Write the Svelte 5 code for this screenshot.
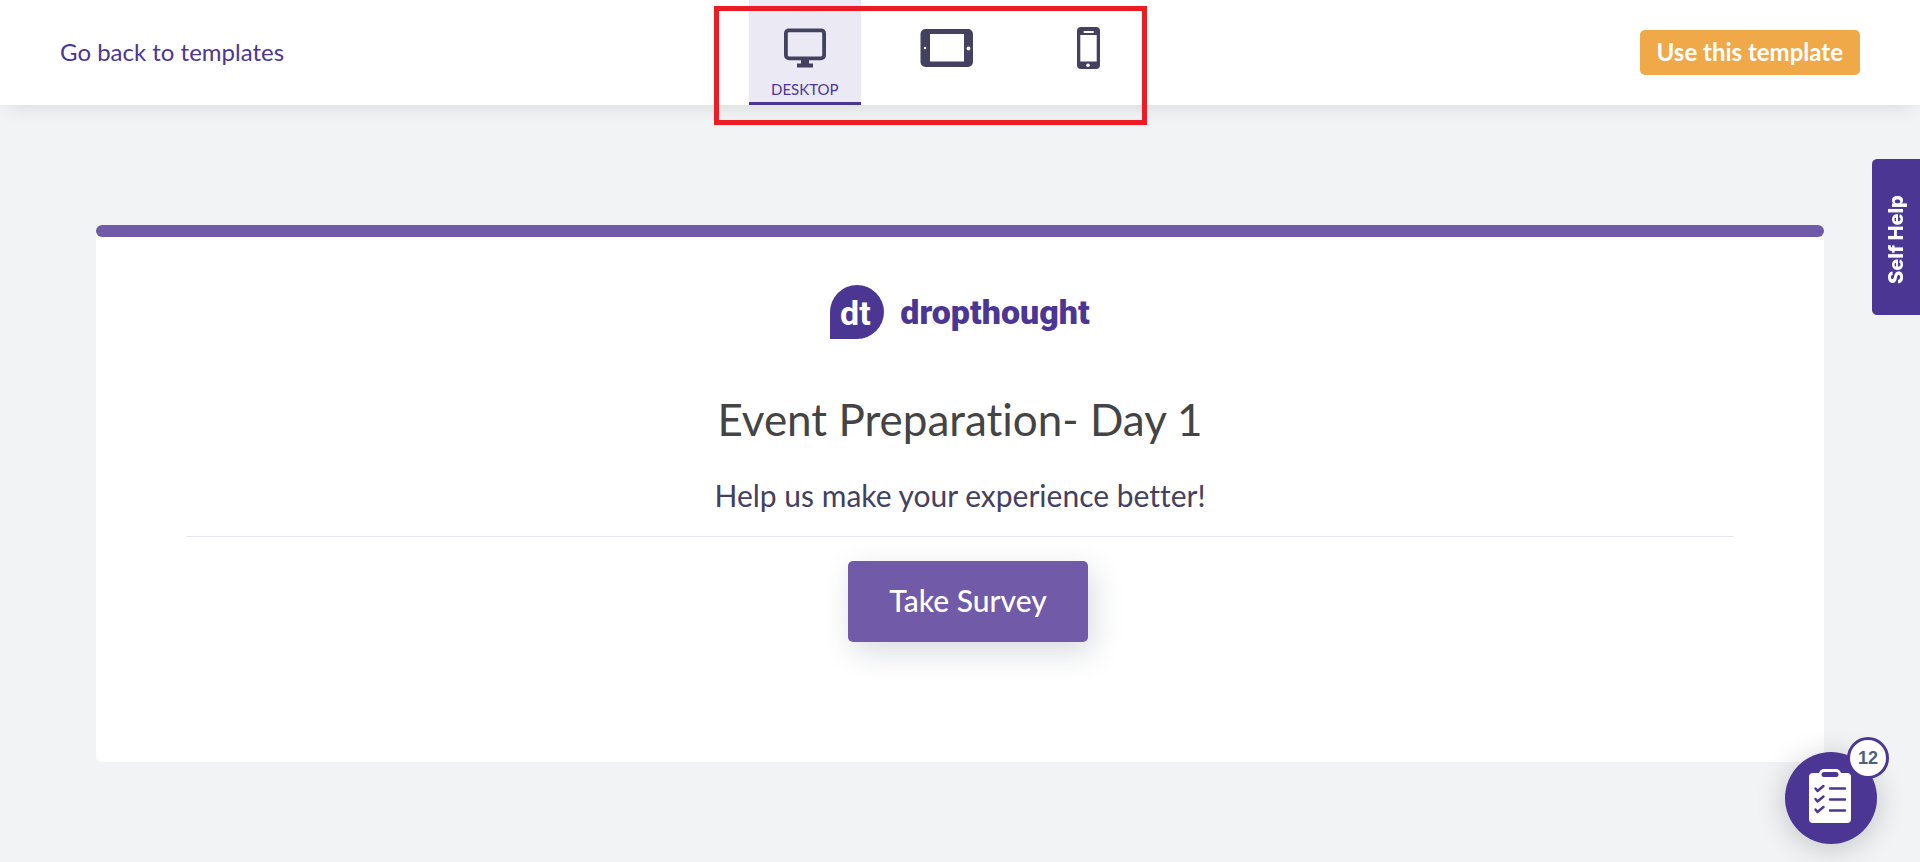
<script lang="ts">
    let device = $state("desktop");

    const devices = [
        { id: "desktop", label: "Desktop" },
        { id: "tablet", label: "Tablet" },
        { id: "mobile", label: "Mobile" },
    ];

    const openTasks = 12;
</script>

<div class="preview">
    <header class="topbar">
        <a class="back" href="#templates">Go back to templates</a>

        <nav class="devices" aria-label="Preview device">
            {#each devices as d (d.id)}
                <button
                    class="device"
                    class:active={device === d.id}
                    aria-label={d.label}
                    onclick={() => (device = d.id)}
                >
                    <span class="icon">
                        {#if d.id === "desktop"}
                            <svg width="42" height="40" viewBox="0 0 42 40">
                                <rect x="1.9" y="2.3" width="38.2" height="28" rx="3" fill="none" stroke="#43415f" stroke-width="3.8" />
                                <path d="M17 31h8v4.500h4v4H13v-4h4z" fill="#43415f" />
                            </svg>
                        {:else if d.id === "tablet"}
                            <svg width="53" height="40" viewBox="0 0 53 40">
                                <path
                                    fill="#43415f"
                                    fill-rule="evenodd"
                                    d="M5.500 1h42.500a5 5 0 0 1 5 5v28a5 5 0 0 1-5 5H5.500a5 5 0 0 1-5-5V6a5 5 0 0 1 5-5zM10 6v27.500h34V6z"
                                />
                                <circle cx="5" cy="20" r="1.200" fill="#fff" />
                                <circle cx="48.500" cy="20.500" r="1.900" fill="#fff" />
                            </svg>
                        {:else}
                            <svg width="23" height="42" viewBox="0 0 23 42">
                                <rect width="23" height="42" rx="4" fill="#43415f" />
                                <rect x="3.300" y="8" width="16.400" height="26.500" fill="#fff" />
                                <rect x="6.500" y="4" width="10.500" height="2" rx="1" fill="#fff" />
                                <circle cx="11" cy="38.300" r="1.800" fill="#fff" />
                            </svg>
                        {/if}
                    </span>
                    {#if device === d.id}
                        <span class="label">{d.label}</span>
                    {/if}
                </button>
            {/each}
            <span class="highlight"></span>
        </nav>

        <button class="use">Use this template</button>
    </header>

    <main class="card">
        <div class="accent"></div>
        <div class="logo">
            <span class="mark">dt</span>
            <span class="wordmark">dropthought</span>
        </div>
        <h1>Event Preparation- Day 1</h1>
        <p>Help us make your experience better!</p>
        <hr />
        <button class="start">Take Survey</button>
    </main>

    <button class="self-help">Self Help</button>

    <button class="tasks" aria-label="Tasks">
        <svg width="42" height="54" viewBox="0 0 42 54">
            <rect y="4" width="42" height="50" rx="4" fill="#fff" />
            <rect x="10" y="0" width="22" height="10" rx="5" fill="#fff" />
            <rect x="12.500" y="3" width="17" height="5" rx="2.500" fill="#4c3693" />
            <g fill="none" stroke="#4c3693" stroke-width="2.400" stroke-linecap="round" stroke-linejoin="round">
                <path d="M6.500 19.500l2 2.500 6-5" />
                <path d="M6.500 30l2 2.500 6-5" />
                <path d="M6.500 40.500l2 2.500 6-5" />
                <path d="M21 19.500h15M21 30.500h15M21 41.500h15" />
            </g>
        </svg>
        <span class="badge">{openTasks}</span>
    </button>
</div>

<style>
    :global(body) {
        background: #f2f3f5;
    }

    .preview {
        min-height: 100vh;
        background: #f2f3f5;
        font-family: Lato, "Open Sans", sans-serif;
        font-variant-ligatures: none;
    }

    button {
        font-family: inherit;
        border: 0;
        padding: 0;
        cursor: pointer;
    }

    .topbar {
        display: flex;
        justify-content: space-between;
        align-items: center;
        height: 105px;
        padding: 0 60px;
        background: #fff;
        box-shadow: 0 8px 20px -8px rgba(0, 0, 0, 0.13);
    }

    .back {
        padding-bottom: 2px;
        color: #4c3693;
        font-size: 24px;
        text-decoration: none;
    }

    .devices {
        position: relative;
        display: flex;
        align-self: stretch;
    }

    .device {
        display: flex;
        flex-direction: column;
        align-items: center;
        width: 112px;
        margin-right: 30px;
        padding-top: 27px;
        background: none;
        border-bottom: 3px solid transparent;
    }

    .device.active {
        background: #ebeaf4;
        border-bottom-color: #4c3693;
    }

    .icon {
        display: flex;
        align-items: center;
        height: 42px;
    }

    .label {
        margin-top: 11px;
        color: #4c3693;
        font-size: 15px;
        line-height: 18px;
        text-transform: uppercase;
    }

    .highlight {
        position: absolute;
        top: 6px;
        left: -35px;
        right: 28px;
        height: 109px;
        border: 5px solid #ed1c24;
        pointer-events: none;
    }

    .use {
        height: 45px;
        padding: 0 17px 2px;
        border-radius: 5px;
        background: #efa948;
        color: #fff;
        font-size: 24px;
        font-weight: 700;
    }

    .card {
        display: flex;
        flex-direction: column;
        align-items: center;
        width: 90%;
        margin: 120px auto 0;
        padding-bottom: 120px;
        background: #fff;
        border-radius: 5px;
    }

    .accent {
        width: 100%;
        height: 12px;
        border-radius: 6px;
        background: #715aa7;
    }

    .logo {
        display: flex;
        align-items: center;
        gap: 16px;
        margin-top: 47px;
        color: #4c3693;
        font-family: Roboto, sans-serif;
        font-weight: 700;
    }

    .mark {
        width: 54px;
        height: 54px;
        box-sizing: border-box;
        padding-right: 4px;
        border-radius: 50% 50% 50% 0;
        background: #4c3693;
        color: #fff;
        font-size: 34px;
        line-height: 56px;
        text-align: center;
    }

    .wordmark {
        font-size: 34px;
        font-weight: 900;
        line-height: 56px;
    }

    h1 {
        margin: 49px 0 0;
        color: #444;
        font-size: 44px;
        font-weight: 400;
        line-height: 60px;
    }

    p {
        margin: 26px 0 0;
        color: #43415f;
        font-size: 30px;
        line-height: 40px;
    }

    hr {
        width: calc(100% - 180px);
        height: 1px;
        margin: 21px 0 24px;
        border: 0;
        background: #e6e6ee;
    }

    .start {
        width: 240px;
        height: 81px;
        margin-left: 16px;
        padding-bottom: 4px;
        border-radius: 5px;
        background: #715aa7;
        box-shadow: 5px 10px 30px rgba(67, 75, 95, 0.2);
        color: #fff;
        font-size: 30px;
        font-weight: 500;
    }

    .self-help {
        position: fixed;
        top: 159px;
        right: 0;
        width: 48px;
        height: 156px;
        padding-bottom: 6px;
        border-radius: 0 5px 5px 0;
        background: #4c3693;
        color: #fff;
        font-family: Inter, sans-serif;
        font-size: 20px;
        font-weight: 800;
        writing-mode: vertical-rl;
        transform: rotate(180deg);
    }

    .tasks {
        position: fixed;
        right: 43px;
        bottom: 18px;
        display: flex;
        align-items: center;
        justify-content: center;
        width: 92px;
        height: 92px;
        padding-right: 2px;
        padding-bottom: 4px;
        border-radius: 50%;
        background: #4c3693;
        box-shadow: 0 4px 30px rgba(0, 0, 0, 0.2);
    }

    .badge {
        position: absolute;
        top: -15px;
        right: -12px;
        width: 36px;
        height: 36px;
        border: 3px solid #4c3693;
        border-radius: 50%;
        background: #fff;
        color: #516079;
        font-family: "Liberation Sans", Arial, sans-serif;
        font-size: 18px;
        font-weight: 700;
        line-height: 36px;
    }
</style>
